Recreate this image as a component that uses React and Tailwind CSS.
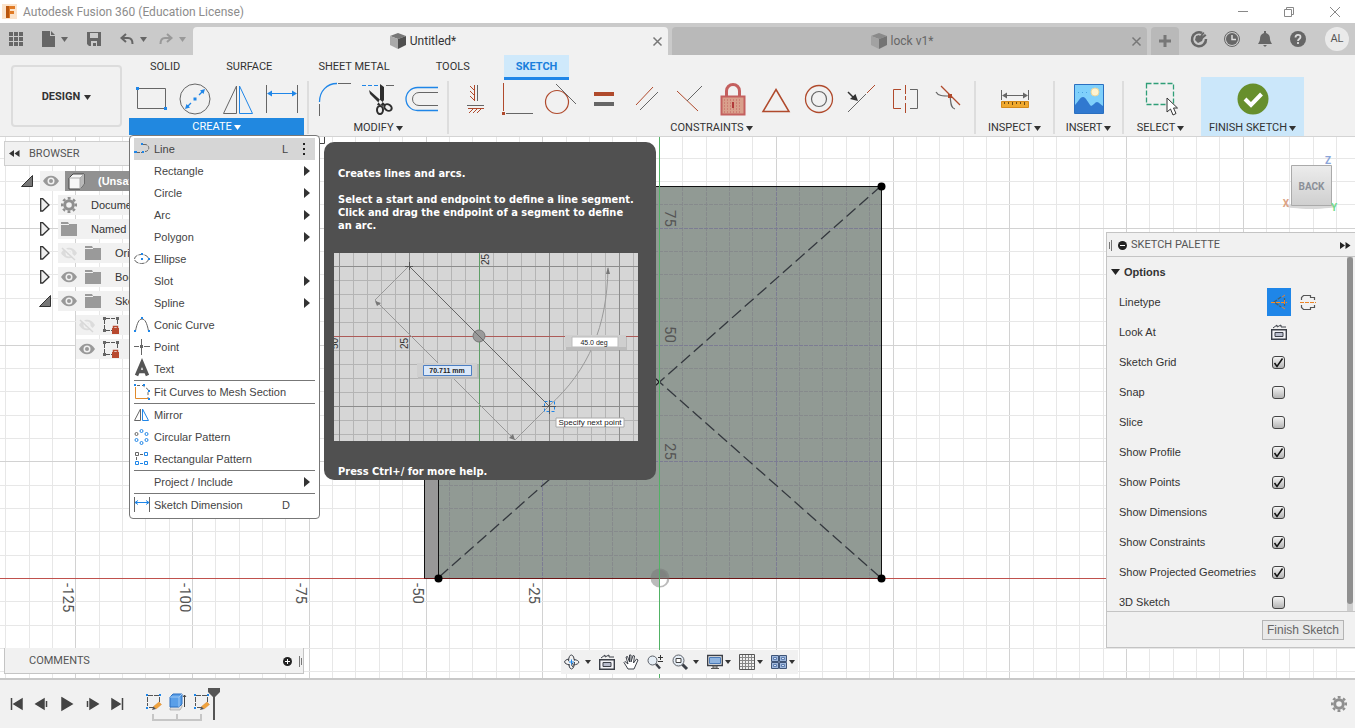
import React, { useState } from "react";

const RED = "#b04a2c";
const GRAY = "#666666";
const BLUE = "#1f86e8";

const Icon = ({ w = 32, h = 32, children, className = "" }) => (
	<svg
		width={w}
		height={h}
		viewBox={`0 0 ${w} ${h}`}
		fill="none"
		className={`shrink-0 overflow-visible ${className}`}
		aria-hidden="true"
	>
		{children}
	</svg>
);

const Caret = ({ color = "#333" }) => (
	<Icon w={7} h={5}>
		<path d="M0 0h7L3.500 5z" fill={color} />
	</Icon>
);

/* ---------- Ribbon icons ---------- */

const createIcons = [
	{
		name: "Rectangle",
		icon: (
			<Icon>
				<path d="M2.500 5.500h28v20h-28z" stroke={GRAY} />
				<path d="M1 4h3v3H1zM29 24h3v3h-3z" fill={BLUE} />
			</Icon>
		),
	},
	{
		name: "Circle",
		icon: (
			<Icon>
				<circle cx="16" cy="16" r="15" stroke={GRAY} />
				<path d="M8 24l4-4M20 12l4-4" stroke={BLUE} strokeWidth="1.300" />
				<path d="M6 26l1.500-5 3.500 3.500zM26 6l-5 1.500 3.500 3.500zM14.500 14.500h3v3h-3z" fill={BLUE} />
			</Icon>
		),
	},
	{
		name: "Mirror",
		icon: (
			<Icon>
				<path d="M14.500 3v27.500H1.500z" stroke={GRAY} />
				<path d="M17.500 3v27.500h13z" stroke={BLUE} />
			</Icon>
		),
	},
	{
		name: "Dimension",
		icon: (
			<Icon>
				<path d="M.500 2v28M31.500 2v28" stroke={GRAY} />
				<path d="M4 10.500h24" stroke={BLUE} />
				<path d="M1 10.500l5-3v6zM31 10.500l-5-3v6z" fill={BLUE} />
			</Icon>
		),
	},
];

const modifyIcons = [
	{
		name: "Fillet",
		icon: (
			<Icon>
				<path d="M1.500 19C1.500 8 9 .500 19 .500" stroke={BLUE} strokeWidth="1.300" />
				<path d="M20 .500h13M1.500 21v12" stroke={GRAY} />
			</Icon>
		),
	},
	{
		name: "Trim",
		icon: (
			<Icon>
				<path d="M0 2.500h16" stroke={BLUE} strokeDasharray="4 2" />
				<path d="M24 2.500h8" stroke={GRAY} />
				<path d="M7 7l1 4 12 12 4-1zM18 1l4 3v13l-4 6-3-1 3-6z" fill="#2e2e2e" />
				<ellipse cx="18" cy="27" rx="3" ry="4" stroke="#2e2e2e" strokeWidth="2" />
				<ellipse cx="26" cy="24.500" rx="4" ry="3" stroke="#2e2e2e" strokeWidth="2" transform="rotate(35 26 24.500)" />
			</Icon>
		),
	},
	{
		name: "Offset",
		icon: (
			<Icon>
				<path d="M32 4.500H11.500a11.500 11.500 0 0 0 0 23H32" stroke={BLUE} strokeWidth="1.300" />
				<path d="M32 9.500H13a6.500 6.500 0 0 0 0 13h19" stroke={GRAY} />
			</Icon>
		),
	},
];

const constraintIcons = [
	{
		name: "Horizontal/Vertical",
		icon: (
			<Icon>
				<path d="M15.500 2v16M9 25.500h16M11 3l4 4M11 8l4 4M11 13l4 4M14 26l-4 4M18 26l-4 4M22 26l-4 4" stroke={RED} />
				<path d="M18.500 2v16M8 22.500h17" stroke={GRAY} />
			</Icon>
		),
	},
	{
		name: "Coincident",
		icon: (
			<Icon>
				<path d="M1.500 0v28" stroke={RED} />
				<path d="M0 29h3v3H0z" fill={RED} />
				<path d="M4 30.500h27" stroke={GRAY} />
			</Icon>
		),
	},
	{
		name: "Tangent",
		icon: (
			<Icon>
				<circle cx="12" cy="19" r="11.500" stroke={RED} strokeWidth="1.200" />
				<path d="M11 1l20 20" stroke={GRAY} />
			</Icon>
		),
	},
	{
		name: "Equal",
		icon: (
			<Icon>
				<path d="M6 9h20v4H6z" fill={RED} />
				<path d="M6 19h20v4H6z" fill={GRAY} />
			</Icon>
		),
	},
	{
		name: "Parallel",
		icon: (
			<Icon>
				<path d="M5 22L22 4" stroke={RED} />
				<path d="M9 27L27 9" stroke={GRAY} />
			</Icon>
		),
	},
	{
		name: "Perpendicular",
		icon: (
			<Icon>
				<path d="M3 8l21 20" stroke={RED} />
				<path d="M13 18L28 3" stroke={GRAY} />
			</Icon>
		),
	},
	{
		name: "Fix",
		icon: (
			<Icon>
				<path d="M9.500 14V8a6.500 6.500 0 0 1 13 0v6" stroke="#c4605f" strokeWidth="3" />
				<path d="M4.500 13.500h23v18h-23z" fill="#d9a08c" stroke="#c4605f" strokeWidth="2" />
				<path d="M7 17h18M7 20h18M7 23h18M7 26h18M7 29h18" stroke="#c4605f" strokeDasharray="1 2" />
				<path d="M16 19v6" stroke="#b23a3a" strokeWidth="2" />
			</Icon>
		),
	},
	{
		name: "Midpoint",
		icon: (
			<Icon>
				<path d="M16 6.500L29 28.500H3z" stroke={RED} strokeWidth="1.500" />
			</Icon>
		),
	},
	{
		name: "Concentric",
		icon: (
			<Icon>
				<circle cx="16" cy="16" r="13.500" stroke={RED} strokeWidth="1.300" />
				<circle cx="16" cy="16" r="7.500" stroke={GRAY} strokeWidth="1.200" />
			</Icon>
		),
	},
	{
		name: "Collinear",
		icon: (
			<Icon>
				<path d="M2 29L20 11" stroke={GRAY} />
				<path d="M21 10l8-8" stroke={RED} />
				<path d="M2 9l6 6" stroke="#333" strokeWidth="1.500" />
				<path d="M12 18l-8-2 5.500-5z" fill="#333" />
			</Icon>
		),
	},
	{
		name: "Symmetry",
		icon: (
			<Icon>
				<path d="M12 6.500H4.500v19H12M16.500 2v9M16.500 13v4M16.500 20v10" stroke={RED} />
				<path d="M21 6.500h7.500v19H21" stroke={GRAY} />
			</Icon>
		),
	},
	{
		name: "Curvature",
		icon: (
			<Icon>
				<path d="M9 3l19 19" stroke={RED} strokeWidth="1.200" />
				<path d="M4 9c2 4 7 4 14 4M18 13c1 5 0 12 5 13" stroke={GRAY} strokeWidth="1.200" />
				<path d="M16 11h4v4h-4z" fill={RED} />
			</Icon>
		),
	},
];

const InspectIcon = () => (
	<Icon>
		<path d="M2.500 7v10M29.500 7v10M4 12.500h24" stroke={GRAY} />
		<path d="M3 12.500l5-3v6zM29 12.500l-5-3v6z" fill={GRAY} />
		<path d="M2.500 18.500h27v6h-27z" fill="#f0a92e" stroke="#d48a1c" />
		<path d="M5.500 19v2M9.500 19v2M13.500 19v3M17.500 19v2M21.500 19v2M25.500 19v3" stroke="#6b4a12" />
	</Icon>
);

const InsertIcon = () => (
	<Icon>
		<path d="M1.500 1.500h29v29h-29z" fill="#7fd0fb" stroke="#2a6fc0" />
		<path d="M2 22c3-3 5-8 8-8s5 6 8 9c3-1 4-4 6-4s4 3 6 4v7H2z" fill="#3079d0" />
		<circle cx="22" cy="9" r="4" fill="#fff3cf" stroke="#e9d7a0" />
		<path d="M5 9.500h12" stroke="#4aa3e0" strokeDasharray="1 3" />
	</Icon>
);

const SelectIcon = () => (
	<Icon>
		<path d="M1.500 .500h27v21h-27z" stroke="#2f9e77" strokeWidth="1.300" strokeDasharray="5 2" />
		<path d="M22 15v14l3.500-3 2.500 6 3-1.500-2.500-5.500h4z" fill="#fff" stroke="#333" />
	</Icon>
);

const FinishIcon = () => (
	<Icon>
		<circle cx="16" cy="16" r="15.500" fill="#678f2c" />
		<path d="M8 16l6 6L24.500 11" stroke="#fff" strokeWidth="4" />
	</Icon>
);

/* ---------- Menu icons, 16px ---------- */

const menuIcons = {
	line: (
		<Icon w={16} h={16}>
			<path d="M2 11.500h8M9 3.500h2c5 0 5 7 0 7" stroke={GRAY} strokeDasharray="4 1" />
			<path d="M0 10h3v2H0zM7 2h2v2H7zM8 10h2v2H8z" fill={BLUE} />
		</Icon>
	),
	ellipse: (
		<Icon w={16} h={16}>
			<ellipse cx="7.500" cy="8" rx="7" ry="4.500" stroke={GRAY} strokeDasharray="5 1" />
			<path d="M7 2h2v2H7zM7 7h2v2H7zM14 7h2v2h-2z" fill={BLUE} />
		</Icon>
	),
	conic: (
		<Icon w={16} h={16}>
			<path d="M1.500 14C3 6 5 2 8 2s5 4 6.500 12" stroke={GRAY} />
			<path d="M0 13h2v2H0zM7 0h2v2H7zM14 13h2v2h-2z" fill={BLUE} />
		</Icon>
	),
	point: (
		<Icon w={16} h={16}>
			<path d="M7.500 0v6M7.500 9v7M0 7.500h5M10 7.500h6" stroke={GRAY} />
			<path d="M6 6h3v3H6z" fill={GRAY} />
		</Icon>
	),
	text: (
		<Icon w={16} h={16}>
			<path d="M2.500 14.500L8 1.500l5.500 13M4.500 10.500h7" stroke="#555" strokeWidth="3.500" />
		</Icon>
	),
	fit: (
		<Icon w={16} h={16}>
			<path d="M1.500 3v11.500H14" stroke="#e08a2c" />
			<path d="M3 1.500h6l5 4V14" stroke={GRAY} strokeDasharray="3 2" />
			<path d="M0 0h2v2H0zM9 0h2v2H9zM14 6h2v2h-2zM14 14h2v2h-2z" fill={BLUE} />
		</Icon>
	),
	mirror: (
		<Icon w={16} h={16}>
			<path d="M6.500 2v11.500h-6z" stroke={GRAY} />
			<path d="M8.500 2v11.500h6z" stroke={BLUE} />
		</Icon>
	),
	circular: (
		<Icon w={16} h={16}>
			<circle cx="2.500" cy="5" r="1.500" stroke={GRAY} />
			<circle cx="7.500" cy="2" r="1.500" stroke={BLUE} />
			<circle cx="12.500" cy="5" r="1.500" stroke={BLUE} />
			<circle cx="12.500" cy="11" r="1.500" stroke={BLUE} />
			<circle cx="7.500" cy="14" r="1.500" stroke={BLUE} />
			<circle cx="2.500" cy="11" r="1.500" stroke={BLUE} />
		</Icon>
	),
	rectangular: (
		<Icon w={16} h={16}>
			<path d="M1.500 1.500h3v3h-3zM6 3.500h3M2.500 6v3" stroke={GRAY} />
			<path d="M10.500 1.500h3v3h-3zM1.500 10.500h3v3h-3zM10.500 10.500h3v3h-3zM6 12.500h3" stroke={BLUE} />
		</Icon>
	),
	dimension: (
		<Icon w={16} h={16}>
			<path d="M.500 0v15M15.500 0v15" stroke={GRAY} />
			<path d="M1 5.500h14M4 3.500l-3 2 3 2M12 3.500l3 2-3 2" stroke={BLUE} />
		</Icon>
	),
};

const createMenu = [
	[
		{ label: "Line", icon: "line", shortcut: "L", active: true },
		{ label: "Rectangle", submenu: true },
		{ label: "Circle", submenu: true },
		{ label: "Arc", submenu: true },
		{ label: "Polygon", submenu: true },
		{ label: "Ellipse", icon: "ellipse" },
		{ label: "Slot", submenu: true },
		{ label: "Spline", submenu: true },
		{ label: "Conic Curve", icon: "conic" },
		{ label: "Point", icon: "point" },
		{ label: "Text", icon: "text" },
	],
	[{ label: "Fit Curves to Mesh Section", icon: "fit" }],
	[
		{ label: "Mirror", icon: "mirror" },
		{ label: "Circular Pattern", icon: "circular" },
		{ label: "Rectangular Pattern", icon: "rectangular" },
	],
	[{ label: "Project / Include", submenu: true }],
	[{ label: "Sketch Dimension", icon: "dimension", shortcut: "D" }],
];

/* ---------- Title bar and document tabs ---------- */

const TitleBar = () => (
	<div className="flex h-[23px] items-center bg-white pl-[2px] pr-[15px]">
		<Icon w={16} h={16}>
			<path d="M0 0h15v15H0z" fill="#fbe3cb" />
			<path d="M4 2h9v3H8v2h4v3H8v4H4z" fill="#e07b26" />
			<path d="M4 2h3v12H4z" fill="#b9560f" />
		</Icon>
		<h1 className="ml-[5px] pt-px text-xs text-[#8c8c8c]">Autodesk Fusion 360 (Education License)</h1>
		<div className="ml-auto flex items-center gap-9">
			<button aria-label="Minimize">
				<Icon w={10} h={10}>
					<path d="M0 4.500h10" stroke="#888" />
				</Icon>
			</button>
			<button aria-label="Restore">
				<Icon w={10} h={10}>
					<path d="M.500 2.500h7v7h-7zM2.500 2V.500h7v7H8" stroke="#888" />
				</Icon>
			</button>
			<button aria-label="Close">
				<Icon w={10} h={10}>
					<path d="M0 0l10 10M10 0L0 10" stroke="#888" />
				</Icon>
			</button>
		</div>
	</div>
);

const CubeIcon = ({ light }) => (
	<Icon w={16} h={16}>
		<path d="M8 0l8 3-8 3-8-3z" fill={light ? "#8a8a8a" : "#777"} />
		<path d="M0 3l8 3v10l-8-4z" fill={light ? "#a2a2a2" : "#a9a9a9"} />
		<path d="M16 3L8 6v10l8-4z" fill={light ? "#747474" : "#4f4f4f"} />
	</Icon>
);

const TabClose = () => (
	<button aria-label="Close tab" className="ml-auto">
		<Icon w={9} h={9}>
			<path d="M.500 .500l8 8M8.500 .500l-8 8" stroke="#777" strokeWidth="1.500" />
		</Icon>
	</button>
);

const TabBar = () => (
	<div className="flex h-8 items-end bg-[#cacaca]">
		<div className="flex h-8 w-[193px] shrink-0 items-center gap-[19px] pl-[9px]">
			<button aria-label="Data panel">
				<Icon w={14} h={14}>
					<path
						d="M0 0h4v4H0zM5 0h4v4H5zM10 0h4v4h-4zM0 5h4v4H0zM5 5h4v4H5zM10 5h4v4h-4zM0 10h4v4H0zM5 10h4v4H5zM10 10h4v4h-4z"
						fill="#666"
					/>
				</Icon>
			</button>
			<button aria-label="File" className="flex items-center gap-1.5">
				<Icon w={13} h={16}>
					<path d="M0 0h8v5h5v11H0zM9 0l4 4H9z" fill="#666" />
				</Icon>
				<Caret color="#666" />
			</button>
			<button aria-label="Save">
				<Icon w={14} h={14}>
					<path d="M0 0h14v14H2l-2-2zM3 1v5h8V1zM4 9v5h2v-3h3v3h1V9z" fill="#666" fillRule="evenodd" />
				</Icon>
			</button>
			<div className="flex items-center gap-3">
				<button aria-label="Undo" className="flex items-center gap-1.5">
					<Icon w={14} h={14}>
						<path d="M6 2L1.500 6 6 10M2 6h6c3 0 4.500 2 4.500 6" stroke="#666" strokeWidth="2" />
					</Icon>
					<Caret color="#666" />
				</button>
				<button aria-label="Redo" className="flex items-center gap-1.5">
					<Icon w={14} h={14}>
						<path d="M8 2l4.500 4L8 10M12 6H6c-3 0-4.500 2-4.500 6" stroke="#999" strokeWidth="2" />
					</Icon>
					<Caret color="#999" />
				</button>
			</div>
		</div>
		<div className="flex h-7 flex-1 items-center rounded-t bg-[#f1f1f1] pr-1.5">
			<div className="ml-auto flex items-center gap-1 text-xs text-[#333]">
				<CubeIcon />
				Untitled*
			</div>
			<TabClose />
		</div>
		<div className="ml-1 flex h-7 flex-1 items-center rounded-t bg-[#b9b9b9] pr-1.5">
			<div className="ml-auto flex items-center gap-1 text-xs text-[#666]">
				<CubeIcon light />
				lock v1*
			</div>
			<TabClose />
		</div>
		<button aria-label="New tab" className="ml-1 flex h-7 w-7 items-center justify-center rounded-t bg-[#b9b9b9]">
			<Icon w={14} h={14}>
				<path d="M7 1v12M1 7h12" stroke="#777" strokeWidth="3" />
			</Icon>
		</button>
		<div className="flex h-8 w-44 shrink-0 items-center gap-[17px] pl-3">
			<button aria-label="Extensions">
				<Icon w={16} h={16}>
					<path d="M11 2a7 7 0 1 0 4 6" stroke="#666" strokeWidth="2.500" />
					<path d="M4 9l1-4 3-1 1 1 3-4 1.500 1-2.500 3.500L14 3l1.500 1.500L12 7.500 11 10l-4 2z" fill="#666" />
				</Icon>
			</button>
			<button aria-label="Job status">
				<Icon w={16} h={16}>
					<circle cx="8" cy="8" r="7.500" stroke="#666" />
					<circle cx="8" cy="8" r="6" fill="#666" />
					<path d="M8 4v4.500h4" stroke="#ddd" strokeWidth="1.500" />
				</Icon>
			</button>
			<button aria-label="Notifications">
				<Icon w={16} h={16}>
					<path d="M7 0h2v2c3 1 4 3 4 6 0 2 1 3 2 5H1c1-2 2-3 2-5 0-3 1-5 4-6zM6 14h4l-2 2z" fill="#666" />
				</Icon>
			</button>
			<button aria-label="Help">
				<Icon w={16} h={16}>
					<circle cx="8" cy="8" r="8" fill="#666" />
					<path d="M5.500 6.500c0-3.500 5-3.500 5-.500 0 2-2.500 2-2.500 4M8 11v2" stroke="#ddd" strokeWidth="1.800" />
				</Icon>
			</button>
			<button className="ml-0.5 h-6 w-6 rounded-full bg-[#eaeaea] text-[11px] text-[#555]">AL</button>
		</div>
	</div>
);

/* ---------- Ribbon ---------- */

const ToolGroup = ({ label, icons, width }) => (
	<div className={`flex shrink-0 flex-col ${width}`}>
		<div className="flex h-[39px] items-center">
			{icons.map((tool) => (
				<button key={tool.name} aria-label={tool.name} className="flex flex-1 justify-center">
					{tool.icon}
				</button>
			))}
		</div>
		<button className="flex h-[18px] items-center justify-center gap-0.5 pt-0.5 text-[11px] text-[#333]">
			{label}
			<Caret />
		</button>
	</div>
);

const Divider = () => <div className="mt-0.5 mb-[2px] w-[2px] shrink-0 bg-[#dddddd]" />;

const CreateMenu = () => (
	<div className="absolute left-0 top-14 w-[191px] rounded-sm border border-[#777] bg-white px-1 py-0.5 font-['Liberation_Sans',Arial,sans-serif]">
		{createMenu.map((section, i) => (
			<ul key={i} className={i > 0 ? "border-t border-[#777]" : ""}>
				{section.map((item) => (
					<li key={item.label}>
						<button
							className={`flex h-[22px] w-full items-center pr-1 text-left text-[11px] text-[#444] ${
								item.active ? "bg-[#d6d6d6]" : "hover:bg-[#e5e5e5]"
							}`}
						>
							<span className="mr-1 w-4 shrink-0">{item.icon && menuIcons[item.icon]}</span>
							<span className="flex-1 whitespace-nowrap">{item.label}</span>
							<span className="w-[22px]">{item.shortcut}</span>
							<span className="flex w-[7px]">
								{item.submenu && (
									<Icon w={6} h={10}>
										<path d="M0 0l6 5-6 5z" fill="#333" />
									</Icon>
								)}
								{item.active && (
									<Icon w={2} h={12}>
										<path d="M-1 0h2v2h-2zM-1 5h2v2h-2zM-1 10h2v2h-2z" fill="#222" />
									</Icon>
								)}
							</span>
						</button>
					</li>
				))}
			</ul>
		))}
	</div>
);

const LinePreview = () => (
	<svg
		width="304"
		height="188"
		viewBox="0 0 304 188"
		className="block overflow-hidden font-['Liberation_Sans',Arial,sans-serif] font-normal"
		fill="none"
	>
		<defs>
			<pattern id="previewGrid" width="14" height="14" x="5" y="-1" patternUnits="userSpaceOnUse">
				<path d="M.500 0v14M0 .500h14" stroke="#b4b4b4" />
			</pattern>
		</defs>
		<path d="M0 0h304v188H0z" fill="#d6d6d6" />
		<path d="M0 0h304v188H0z" fill="url(#previewGrid)" />
		<path d="M5.500 0v188M75.500 0v188M215.500 0v188M285.500 0v188M0 13.500h304M0 153.500h304" stroke="#8c8c8c" />
		<path d="M0 83.500h304" stroke="#ad5b58" />
		<path d="M145.500 0v188" stroke="#5f9f68" />
		<circle cx="145" cy="83" r="6" fill="#9a9a9a" stroke="#777" />
		<path d="M75 13l140 140" stroke="#666" />
		<path d="M75 13L41 47l140 140 34-34M215 153c40-36 58-80 59-138" stroke="#999" />
		<path d="M41 48l6 2-4 3zM181 187l-6-2 4-4zM274 14l-2 7h4z" fill="#777" />
		<path d="M71 13.500h8M75.500 9v8" stroke="#555" />
		<g fontSize="10" fill="#333">
			<text transform="translate(155 12) rotate(-90)">25</text>
			<text transform="translate(74 96) rotate(-90)">25</text>
			<text transform="translate(4 96) rotate(-90)">50</text>
		</g>
		<path d="M84 112h61v14H84zM232 84h61v13h-61z" fill="#bcbcbc" />
		<path d="M83 110h60v14H83zM231 82h61v12h-61z" fill="#cfcfcf" />
		<path d="M89.500 112.500h48v10h-48z" fill="#dbe8f8" stroke="#4c7fc4" />
		<path d="M238 84h46v10h-46z" fill="#fff" stroke="#bbb" />
		<path d="M222 165h68v9h-68z" fill="#fff" stroke="#aaa" />
		<g fontSize="8" fill="#222" textAnchor="middle">
			<text x="113" y="120" fontWeight="bold" fontSize="7">
				70.711 mm
			</text>
			<text x="260" y="92" fontSize="7">
				45.0 deg
			</text>
			<text x="256" y="172">Specify next point</text>
		</g>
		<path d="M210.500 148.500h10v10h-10z" stroke={BLUE} strokeDasharray="3 2" />
		<path d="M208 153.500h14M215.500 147v14" stroke="#555" />
	</svg>
);

const Tooltip = () => (
	<div
		role="tooltip"
		className="absolute left-[195px] top-[63px] w-[332px] rounded-[10px] bg-[#505050] pt-[25px] pb-0.5 font-['DejaVu_Sans_Condensed','DejaVu_Sans',sans-serif] text-[11px] leading-[13px] font-bold text-white"
	>
		<p className="mb-[13px] px-3.5">Creates lines and arcs.</p>
		<p className="mb-[21px] px-3.5">
			Select a start and endpoint to define a line segment.
			<br />
			Click and drag the endpoint of a segment to define
			<br />
			an arc.
		</p>
		<div className="mb-6 ml-2.5">
			<LinePreview />
		</div>
		<p className="px-3.5">Press Ctrl+/ for more help.</p>
	</div>
);

const ribbonTabs = ["SOLID", "SURFACE", "SHEET METAL", "TOOLS", "SKETCH"];

const Ribbon = () => (
	<div className="relative z-20 flex h-[82px] border-b border-[#d4d4d4] bg-[#f1f1f1]">
		<div className="w-[129px] shrink-0 px-[11px] pt-2.5">
			<button className="flex h-[62px] w-[111px] items-center justify-center gap-1 rounded border-2 border-[#dcdcdc] pt-0.5 text-[11px] font-bold text-[#333]">
				DESIGN
				<Caret />
			</button>
		</div>
		<div className="flex flex-1 flex-col">
			<div className="flex h-6 gap-[22px] pl-[9px]">
				{ribbonTabs.map((tab) => (
					<button
						key={tab}
						className={`h-[25px] px-3 text-[11px] ${
							tab === "SKETCH"
								? "border-b-[3px] border-[#1f86e8] bg-[#cfe9fb] pt-[2px] font-bold text-[#1a7fdc]"
								: "text-[#333]"
						}`}
					>
						{tab}
					</button>
				))}
			</div>
			<div className="flex flex-1">
				<div className="relative mr-[3px] w-[175px] shrink-0">
					<div className="flex h-[39px] items-center">
						{createIcons.map((tool) => (
							<button key={tool.name} aria-label={tool.name} className="flex flex-1 justify-center">
								{tool.icon}
							</button>
						))}
					</div>
					<button className="flex h-[17px] w-full items-center justify-center gap-0.5 bg-[#2188e0] pt-0.5 text-[11px] text-white">
						CREATE
						<Caret color="#fff" />
					</button>
					<CreateMenu />
					<Tooltip />
				</div>
				<Divider />
				<ToolGroup label="MODIFY" icons={modifyIcons} width="w-[138px] px-[3px]" />
				<Divider />
				<ToolGroup label="CONSTRAINTS" icons={constraintIcons} width="w-[525px] px-1" />
				<Divider />
				<ToolGroup label="INSPECT" icons={[{ name: "Measure", icon: <InspectIcon /> }]} width="w-[77px]" />
				<Divider />
				<ToolGroup label="INSERT" icons={[{ name: "Insert image", icon: <InsertIcon /> }]} width="w-[67px]" />
				<Divider />
				<ToolGroup label="SELECT" icons={[{ name: "Select", icon: <SelectIcon /> }]} width="w-[77px] pr-1" />
				<div className="-mt-[2px] bg-[#cbe7fa] pt-[2px]">
					<ToolGroup label="FINISH SKETCH" icons={[{ name: "Finish", icon: <FinishIcon /> }]} width="w-[103px]" />
				</div>
			</div>
		</div>
	</div>
);

/* ---------- Sketch canvas ---------- */

const axisLabels = [
	{ text: "75", x: 665, y: 73 },
	{ text: "50", x: 665, y: 189 },
	{ text: "25", x: 665, y: 306 },
	{ text: "-125", x: 63, y: 446 },
	{ text: "-100", x: 180, y: 446 },
	{ text: "-75", x: 296, y: 446 },
	{ text: "-50", x: 413, y: 446 },
	{ text: "-25", x: 529, y: 446 },
];

const columns = Array.from({ length: 70 }, (_, i) => i - 28);
const rows = Array.from({ length: 40 }, (_, i) => i - 18);
const STEP = 23.35;

const SketchCanvas = () => (
	<svg className="absolute inset-0 h-full w-full" fill="none" aria-hidden="true">
		{columns.map((n) => (
			<path
				key={n}
				d={`M${Math.floor(659.5 + n * STEP) + 0.5} 0V2000`}
				stroke={n % 5 === 0 ? "#d2d2d2" : "#e7e7e7"}
			/>
		))}
		{rows.map((n) => (
			<path
				key={n}
				d={`M0 ${Math.floor(441.5 - n * STEP) + 0.5}H3000`}
				stroke={n % 5 === 0 ? "#d2d2d2" : "#e7e7e7"}
			/>
		))}
		<path d="M0 441.500H3000" stroke="#c0514d" />
		<path d="M424.500 49.500h14v392h-14z" fill="#989898" stroke="#111" />
		<path d="M438.500 49.500h443v392h-443z" fill="#919a94" />
		{columns
			.filter((n) => n > -10 && n < 10 && n !== 0)
			.map((n) => (
				<path
					key={n}
					d={`M${Math.floor(659.5 + n * STEP) + 0.5} 50V441`}
					stroke={n % 5 === 0 ? "#7c7c93" : "#868a8c"}
					strokeDasharray="4 1"
				/>
			))}
		{rows
			.filter((n) => n > 0 && n < 17)
			.map((n) => (
				<path
					key={n}
					d={`M439 ${Math.floor(441.5 - n * STEP) + 0.5}H881`}
					stroke={n % 5 === 0 ? "#7c7c93" : "#868a8c"}
					strokeDasharray="4 1"
				/>
			))}
		<path d="M438.500 49.500h443v392M438.500 49.500v392" stroke="#111" />
		<path d="M424 441.500h458" stroke="#6e1515" />
		<path d="M881 49L438 441M438 49l443 392" stroke="#34383e" strokeWidth="1.300" strokeDasharray="12 5" />
		<path d="M655 241l4 4-4 4-4-4z" stroke="#222" />
		<path d="M319 6.500h5.500V0" stroke="#444" />
		<g fill="#000">
			<circle cx="881.500" cy="49.500" r="4" />
			<circle cx="881.500" cy="441.500" r="4" />
			<circle cx="438.500" cy="441.500" r="4" />
		</g>
		<circle cx="660" cy="441" r="9.500" fill="#777" fillOpacity=".5" />
		<path d="M660 442h7a7 7 0 0 1-7 7z" fill="#fff" />
		<path d="M660 440v-7a7 7 0 0 1 7 7z" fill="#777" fillOpacity=".4" />
		<path d="M659 0h1v2000h-1z" fill="#52b265" />
		<g fontFamily="Roboto" fontSize="15" fill="#555">
			{axisLabels.map((l) => (
				<text key={l.text} transform={`translate(${l.x} ${l.y}) rotate(90)`}>
					{l.text}
				</text>
			))}
		</g>
	</svg>
);

/* ---------- Browser ---------- */

const Eye = ({ off }) => (
	<Icon w={16} h={16}>
		<path d="M0 8c4-7 12-7 16 0-4 7-12 7-16 0z" fill={off ? "#dcdcdc" : "#999"} />
		<circle cx="8" cy="8" r="3.500" fill="#f1f1f1" />
		<circle cx="8" cy="8" r="2" fill={off ? "#dcdcdc" : "#999"} />
		{off && <path d="M2 2l13 12" stroke="#f1f1f1" strokeWidth="2.500" />}
		{off && <path d="M1 3l13 12" stroke="#d8d8d8" strokeWidth="1.500" />}
	</Icon>
);

const Folder = () => (
	<Icon w={16} h={14}>
		<path d="M0 0h7l1 2h8v12H0z" fill="#9a9a9a" />
		<path d="M0 2.500h8" stroke="#f1f1f1" />
	</Icon>
);

const Gear = ({ color = "#8f8f8f" }) => (
	<Icon w={16} h={16}>
		<circle cx="8" cy="8" r="4.300" stroke={color} strokeWidth="3" />
		<circle
			cx="8"
			cy="8"
			r="6.800"
			stroke={color}
			strokeWidth="2.500"
			strokeDasharray="2.800 2.540"
			transform="rotate(-12 8 8)"
		/>
	</Icon>
);

const SketchLocked = () => (
	<Icon w={17} h={17}>
		<path d="M3 1.500h10M3 13.500h6M1.500 3v9M14.500 3v5" stroke="#555" strokeDasharray="4 1" />
		<path d="M0 0h3v3H0zM13 0h3v3h-3zM0 12h3v3H0z" fill="#666" />
		<path d="M9 11h7v6H9z" fill="#b8492f" />
		<path d="M10.500 11V9.500h4V11" stroke="#b8492f" strokeWidth="1.500" />
	</Icon>
);

const BodyCube = () => (
	<Icon w={17} h={17}>
		<path d="M1 5l4-4h11v10l-4 5H1z" fill="#f6f6f6" stroke="#444" />
		<path d="M12 5l4-4v10l-4 5z" fill="#b9b9b9" />
		<path d="M1 5h11v11M12 5l4-4" stroke="#aaa" />
	</Icon>
);

const tree = [
	{ id: "doc", label: "Document Settings", icon: <Gear />, arrow: "closed" },
	{ id: "views", label: "Named Views", icon: <Folder />, arrow: "closed" },
	{ id: "origin", label: "Origin", icon: <Folder />, eye: "off", arrow: "closed" },
	{ id: "bodies", label: "Bodies", icon: <Folder />, eye: "on", arrow: "closed" },
	{ id: "sketches", label: "Sketches", icon: <Folder />, eye: "on", arrow: "open" },
	{ id: "s1", icon: <SketchLocked />, eye: "off", nested: true },
	{ id: "s2", icon: <SketchLocked />, eye: "on", nested: true },
];

const Arrow = ({ kind }) => (
	<span className="flex w-[18px] shrink-0">
		{kind === "open" && (
			<Icon w={12} h={12} className="-ml-px">
				<path d="M11.500 .500v11H.500z" fill="#777" stroke="#333" />
			</Icon>
		)}
		{kind === "closed" && (
			<Icon w={10} h={14}>
				<path d="M.700 .700h2L9 7l-6.300 6H.700z" fill="#eee" stroke="#333" strokeWidth="1.300" />
			</Icon>
		)}
	</span>
);

const Browser = () => (
	<section className="w-[300px] pt-1">
		<h2 className="flex h-[25px] items-center gap-[9px] border border-[#cfcfcf] bg-[#f1f1f1] pt-px pl-1 text-[11px] text-[#555]">
			<Icon w={11} h={8}>
				<path d="M5 0v7L0 3.500zM10.500 0v7l-5-3.500z" fill="#333" />
			</Icon>
			BROWSER
		</h2>
		<ul className="mt-[3px] w-[148px] font-['Liberation_Sans',Arial,sans-serif] text-[11px] text-[#333]">
			<li className="flex h-6 items-center pl-[18px]">
				<Arrow kind="open" />
				<div className="flex h-5 flex-1 items-center overflow-hidden bg-[#f1f1f1] pl-[3px]">
					<Eye />
					<div className="ml-1.5 flex h-5 flex-1 items-center gap-[13px] bg-[#919191] pl-[3px] font-bold text-white">
						<BodyCube />
						(Unsaved)
					</div>
				</div>
			</li>
			{tree.map((node) => (
				<li key={node.id} className={`flex h-6 items-center ${node.nested ? "pl-[54px]" : "pl-9"}`}>
					<Arrow kind={node.arrow} />
					<div className="flex h-5 flex-1 items-center overflow-hidden bg-[#f1f1f1] pl-[3px] whitespace-nowrap">
						{node.eye && (
							<span className="mr-2">
								<Eye off={node.eye === "off"} />
							</span>
						)}
						{node.icon}
						{node.label && <span className="ml-3.5">{node.label}</span>}
					</div>
				</li>
			))}
		</ul>
	</section>
);

/* ---------- Sketch palette ---------- */

const paletteOptions = [
	{ id: "grid", label: "Sketch Grid", on: true },
	{ id: "snap", label: "Snap", on: false },
	{ id: "slice", label: "Slice", on: false },
	{ id: "profile", label: "Show Profile", on: true },
	{ id: "points", label: "Show Points", on: true },
	{ id: "dimensions", label: "Show Dimensions", on: true },
	{ id: "constraints", label: "Show Constraints", on: true },
	{ id: "projected", label: "Show Projected Geometries", on: true },
	{ id: "sketch3d", label: "3D Sketch", on: false },
];

const LookAtIcon = () => (
	<Icon w={16} h={16}>
		<path d="M.700 5.700h14.600v9.600H.700z" fill="#f4f4f8" stroke="#3c4048" strokeWidth="1.400" />
		<path d="M4 8.500h8v4H4z" fill="#b8bccc" stroke="#3c4048" />
		<path d="M2 4l4-3v2l4-2v2h5" stroke="#3c4048" />
	</Icon>
);

const SketchPalette = () => {
	const [checked, setChecked] = useState(
		Object.fromEntries(paletteOptions.map((o) => [o.id, o.on]))
	);

	return (
		<section className="w-[249px] border border-r-0 border-[#c4c4c4] bg-[#f1f1f1]">
			<h2 className="flex h-6 items-center border-b border-[#c4c4c4] pt-px pr-1 pl-0.5 text-[11px] text-[#555]">
				<Icon w={4} h={11}>
					<path d="M.500 2v7M2.500 0v11" stroke="#777" />
				</Icon>
				<Icon w={9} h={9} className="mr-1 ml-[5px]">
					<circle cx="4.500" cy="4.500" r="4.500" fill="#222" />
					<path d="M2 4.500h5" stroke="#fff" />
				</Icon>
				SKETCH PALETTE
				<Icon w={11} h={7} className="ml-auto">
					<path d="M0 0v7l5-3.500zM5.500 0v7l5-3.500z" fill="#222" />
				</Icon>
			</h2>
			<div className="flex h-[354px] overflow-hidden font-['Liberation_Sans',Arial,sans-serif] text-[11px] text-[#333]">
				<div className="flex-1">
					<h3 className="flex h-[30px] items-center gap-1 pl-1 font-bold">
						<Icon w={9} h={6}>
							<path d="M0 0h9L4.500 6z" fill="#222" />
						</Icon>
						Options
					</h3>
					<div className="flex h-[30px] items-center pl-3">
						<span className="w-[148px]">Linetype</span>
						<button aria-label="Construction" className="flex h-7 w-6 items-center justify-center bg-[#1f86e8]">
							<Icon w={16} h={16}>
								<path d="M10 3L3 8l7 5M13.500 4v8" stroke="#47606a" strokeWidth="1.300" strokeDasharray="4 1" />
								<path d="M0 8.500h16" stroke="#ff8c1a" strokeDasharray="4 1" />
								<path d="M11 3l3-2M11 13l3 2M13.500 6v4" stroke="#e8812f" />
							</Icon>
						</button>
						<button aria-label="Centerline" className="ml-[9px]">
							<Icon w={16} h={16}>
								<path
									d="M1.500 6V3.500l2-2h7v2h4V6M1.500 11v2.500l2 2h7v-2h4V11"
									stroke="#555"
									strokeWidth="1.200"
								/>
								<path d="M0 8.500h16" stroke="#ec8526" strokeDasharray="4 1" />
							</Icon>
						</button>
					</div>
					<div className="flex h-[30px] items-center pl-3">
						<span className="w-[148px]">Look At</span>
						<button aria-label="Look At" className="flex w-6 justify-center">
							<LookAtIcon />
						</button>
					</div>
					{paletteOptions.map((option) => (
						<div key={option.id} className="flex h-[30px] items-center pl-3">
							<label htmlFor={option.id} className="w-[148px]">
								{option.label}
							</label>
							<span className="grid w-[23px] place-items-center">
								<input
									id={option.id}
									type="checkbox"
									checked={checked[option.id]}
									onChange={() => setChecked({ ...checked, [option.id]: !checked[option.id] })}
									className="peer col-start-1 row-start-1 h-[13px] w-[13px] appearance-none rounded-[3px] border border-[#444] bg-gradient-to-b from-[#f6f6f6] to-[#b4b4b4]"
								/>
								<Icon w={9} h={9} className="pointer-events-none invisible col-start-1 row-start-1 peer-checked:visible">
									<path d="M.500 5l2.500 3.500L8.500 .500" stroke="#111" strokeWidth="1.500" />
								</Icon>
							</span>
						</div>
					))}
				</div>
				<div className="mr-0.5 w-1.5 bg-[#cfcfcf]">
					<div className="h-[347px] rounded-full bg-[#8f8f8f]" />
				</div>
			</div>
			<div className="flex h-9 items-center justify-end border-t border-[#c4c4c4] pr-[11px]">
				<button className="h-5 w-[82px] border border-[#b4b4b4] bg-[#e9e9e9] font-['Liberation_Sans',Arial,sans-serif] text-xs whitespace-nowrap text-[#666]">
					Finish Sketch
				</button>
			</div>
		</section>
	);
};

const ViewCube = () => (
	<Icon w={56} h={60} className="mr-[18px] mb-[18px] ml-auto">
		<defs>
			<linearGradient id="cubeFace" x1="0" y1="0" x2="0" y2="1">
				<stop offset="0" stopColor="#ececec" />
				<stop offset="1" stopColor="#cfcfcf" />
			</linearGradient>
		</defs>
		<ellipse cx="30" cy="52" rx="25" ry="3" fill="#d8d8d8" />
		<path d="M10.500 11.500h40v40h-40z" fill="url(#cubeFace)" stroke="#aaa" />
		<g fontFamily="Roboto" fontWeight="bold" fontSize="10" textAnchor="middle">
			<text x="30.500" y="36" fill="#8b9098">
				BACK
			</text>
			<text x="47" y="10" fill="#8ba5d8">
				Z
			</text>
			<text x="5" y="53" fill="#dca384">
				X
			</text>
			<text x="53" y="57" fill="#6fdc8c">
				Y
			</text>
		</g>
	</Icon>
);

/* ---------- Bottom bars ---------- */

const navTools = [
	{
		name: "Orbit",
		menu: "gap-[5px]",
		icon: (
			<Icon w={16} h={16}>
				<ellipse cx="7.500" cy="8" rx="3" ry="7" stroke="#3c4048" strokeDasharray="14 3" />
				<path d="M5 5C-1 6-1 10 6 11M10 5.500c7 1 6 5-1 5.500M9 9l-1.500 2L9 13" stroke="#3c4048" />
				<path d="M7.500 5.500v5M5 8h5" stroke={BLUE} />
			</Icon>
		),
	},
	{ name: "Look At", icon: <LookAtIcon /> },
	{
		name: "Pan",
		icon: (
			<Icon w={16} h={16}>
				<path
					d="M5 15L1 8.500l1-1L5 10 3 3l1.500-.500L6.500 8V1H8v7l2-6.500 1.500.500-1 7 3-4 1.500 1-4 9z"
					fill="#fff"
					stroke="#3c4048"
				/>
			</Icon>
		),
	},
	{
		name: "Zoom",
		icon: (
			<Icon w={16} h={16}>
				<circle cx="5.500" cy="6.500" r="4.500" fill="#e6eef6" stroke="#5c6068" />
				<path d="M9 10l4 4.500" stroke="#3c4048" strokeWidth="2.500" />
				<path d="M11 3.500h5M13.500 1v5M11 7.500h5" stroke="#333" />
			</Icon>
		),
	},
	{
		name: "Fit",
		menu: "gap-[5px]",
		icon: (
			<Icon w={16} h={16}>
				<circle cx="6.500" cy="6.500" r="5.500" fill="#e6eef6" stroke="#5c6068" />
				<path d="M4 4.500h5v4H4z" fill="#fff" stroke="#444" />
				<path d="M10.500 10.500L15 15" stroke="#3c4048" strokeWidth="3" />
			</Icon>
		),
	},
	{
		name: "Display Settings",
		menu: "gap-0.5",
		icon: (
			<Icon w={16} h={16}>
				<path d="M.700 1.500h14.600v10H.700z" fill="#fff" stroke="#3c4048" strokeWidth="1.400" />
				<path d="M2.500 3.500h11v6h-11z" fill="#8fb4e0" stroke="#4a7ab8" />
				<path d="M6 12h4v2H6zM4 14.500h8" stroke="#555" />
			</Icon>
		),
	},
	{
		name: "Grid and Snaps",
		menu: "gap-0.5",
		icon: (
			<Icon w={16} h={16}>
				<path d="M3.500 0v16M6.500 0v16M9.500 0v16M12.500 0v16M0 3.500h16M0 6.500h16M0 9.500h16M0 12.500h16" stroke="#888" />
				<path d="M.500 .500h15v15H.500z" stroke="#555" />
			</Icon>
		),
	},
	{
		name: "Viewports",
		menu: "gap-0.5",
		icon: (
			<Icon w={16} h={14}>
				<path d="M.500 .500h7v6h-7zM8.500 .500h7v6h-7zM.500 7.500h7v6h-7zM8.500 7.500h7v6h-7z" fill="#9fb8dc" stroke="#3f5578" />
				<path d="M2.500 2.500h3v2h-3zM10.500 2.500h3v2h-3zM2.500 9.500h3v2h-3zM10.500 9.500h3v2h-3z" fill="#d8e4f4" stroke="#5c7db0" />
			</Icon>
		),
	},
];

const BottomRow = () => (
	<div className="relative mb-1 grid h-[26px] grid-cols-[1fr_auto_1fr] pl-1">
		<section className="flex w-[300px] items-center border border-t-0 border-[#c4c4c4] bg-[#f1f1f1] pt-0.5 pl-6 text-[11px] text-[#555]">
			<h2>COMMENTS</h2>
			<button aria-label="Add comment" className="mr-[7px] ml-auto">
				<Icon w={9} h={9}>
					<circle cx="4.500" cy="4.500" r="4.500" fill="#222" />
					<path d="M2 4.500h5M4.500 2v5" stroke="#fff" />
				</Icon>
			</button>
			<Icon w={4} h={11}>
				<path d="M.500 0v11M2.500 2v7" stroke="#777" />
			</Icon>
		</section>
		<nav className="mt-[2px] flex h-6 w-[237px] items-center justify-between bg-[#f1f1f1] px-[3px]">
			{navTools.map((tool) => (
				<button key={tool.name} aria-label={tool.name} className={`flex items-center ${tool.menu || ""}`}>
					{tool.icon}
					{tool.menu && (
						<Icon w={6} h={4}>
							<path d="M0 0h6L3 4z" fill="#333" />
						</Icon>
					)}
				</button>
			))}
		</nav>
	</div>
);

const playback = [
	{ name: "Go to start", d: "M2.500 2v12M13 3v10L5 8z" },
	{ name: "Step back", d: "M2 8l8-5v10zM12.500 5v6" },
	{ name: "Play", d: "M3 2l10 6-10 6z" },
	{ name: "Step forward", d: "M14 8L6 3v10zM3.500 5v6" },
	{ name: "Go to end", d: "M13.500 2v12M3 3v10l8-5z" },
];

const SketchFeature = () => (
	<Icon w={17} h={17}>
		<path d="M3 2.500h11M2.500 4v9M4 14.500h6M14.500 4v5" stroke="#555" strokeDasharray="5 1" />
		<path d="M1 1h2v2H1zM14 1h2v2h-2zM1 14h2v2H1z" fill={BLUE} />
		<path d="M8.500 13.500L14 9l2.500 2.500-5.500 4.500z" fill="#f0a23c" stroke="#d98c3a" strokeWidth=".500" />
		<path d="M8.500 13.500l2.500 2.500-4 1z" fill="#555" />
	</Icon>
);

const ExtrudeFeature = () => (
	<Icon w={17} h={17}>
		<path d="M1 15l3-3h9v2l-2 3H1z" fill="#ddd" stroke="#888" strokeWidth=".500" />
		<path d="M1 4l3-3h9v10l-3 3H1z" fill="#5a9fe8" stroke="#2a6fc0" />
		<path d="M1 4h9v10M10 4l3-3" stroke="#9cc8f5" />
		<path d="M15.500 2v12M14 4l1.500-2L17 4" stroke="#444" />
	</Icon>
);

const Timeline = () => (
	<footer className="flex h-[50px] items-center border-t-2 border-[#c8c8c8] bg-[#f1f1f1] pr-2 pl-[9px]">
		<div className="flex gap-[9px]">
			{playback.map((p) => (
				<button key={p.name} aria-label={p.name}>
					<Icon w={16} h={16}>
						<path d={p.d} fill="#444" stroke="#444" strokeWidth="1.500" />
					</Icon>
				</button>
			))}
		</div>
		<div className="ml-4 flex flex-col items-center pt-1.5">
			<div className="flex">
				<button aria-label="Sketch feature" className="flex w-6 justify-center">
					<SketchFeature />
				</button>
				<button aria-label="Extrude feature" className="flex w-6 justify-center">
					<ExtrudeFeature />
				</button>
				<button aria-label="Current sketch feature" className="flex w-6 justify-center">
					<SketchFeature />
				</button>
			</div>
			<Icon w={50} h={7} className="mt-1">
				<path d="M1 0v6h48V0M25 0v6" stroke="#c6c6c6" strokeWidth="2" />
			</Icon>
		</div>
		<Icon w={12} h={32} className="-ml-[5px]">
			<path d="M0 0h12v4L7 9v23H5V9L0 4z" fill="#555" />
		</Icon>
		<button aria-label="Timeline settings" className="ml-auto">
			<Gear />
		</button>
	</footer>
);

export default function App() {
	return (
		<div className="flex min-h-screen flex-col overflow-hidden bg-white font-['Roboto',sans-serif]">
			<TitleBar />
			<TabBar />
			<Ribbon />
			<main className="relative flex flex-1 flex-col">
				<SketchCanvas />
				<div className="relative flex flex-1 justify-between pl-1">
					<Browser />
					<div className="flex flex-col justify-end">
						<ViewCube />
						<SketchPalette />
					</div>
				</div>
				<BottomRow />
			</main>
			<Timeline />
		</div>
	);
}
